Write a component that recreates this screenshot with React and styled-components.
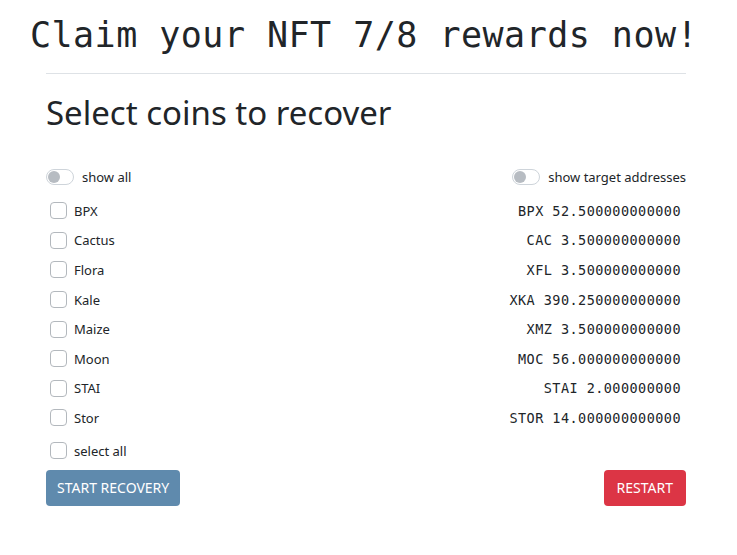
import React, { useState } from "react";
import styled, { createGlobalStyle } from "styled-components";

const GlobalStyle = createGlobalStyle`
  body {
    margin: 0;
    background: #fff;
    color: #212529;
    font-family: "Noto Sans", "Open Sans", sans-serif;
  }
`;

const coins = [
  { name: "BPX", amount: "BPX 52.500000000000" },
  { name: "Cactus", amount: "CAC 3.500000000000" },
  { name: "Flora", amount: "XFL 3.500000000000" },
  { name: "Kale", amount: "XKA 390.250000000000" },
  { name: "Maize", amount: "XMZ 3.500000000000" },
  { name: "Moon", amount: "MOC 56.000000000000" },
  { name: "STAI", amount: "STAI 2.000000000" },
  { name: "Stor", amount: "STOR 14.000000000000" },
];

function App() {
  const [checked, setChecked] = useState({});
  const [showAll, setShowAll] = useState(false);
  const [showTargets, setShowTargets] = useState(false);

  const allChecked = coins.every((c) => checked[c.name]);

  const toggleAll = () => {
    const next = {};
    coins.forEach((c) => (next[c.name] = !allChecked));
    setChecked(next);
  };

  return (
    <Page>
      <GlobalStyle />
      <Title>Claim your NFT 7/8 rewards now!</Title>
      <Container>
        <Divider />
        <Heading>Select coins to recover</Heading>

        <ToggleRow>
          <Toggle>
            <Switch on={showAll} onClick={() => setShowAll(!showAll)} />
            show all
          </Toggle>
          <Toggle>
            <Switch on={showTargets} onClick={() => setShowTargets(!showTargets)} />
            show target addresses
          </Toggle>
        </ToggleRow>

        <CoinList>
          {coins.map((coin) => (
            <CoinRow key={coin.name}>
              <Check>
                <Box
                  checked={!!checked[coin.name]}
                  onClick={() =>
                    setChecked({ ...checked, [coin.name]: !checked[coin.name] })
                  }
                />
                {coin.name}
              </Check>
              <Amount>{coin.amount}</Amount>
            </CoinRow>
          ))}
        </CoinList>

        <SelectAll>
          <Check>
            <Box checked={allChecked} onClick={toggleAll} />
            select all
          </Check>
        </SelectAll>

        <Actions>
          <Button color="#5f8aad" pad="11px">START RECOVERY</Button>
          <Button color="#dc3545" pad="13px">RESTART</Button>
        </Actions>
      </Container>
    </Page>
  );
}

const Page = styled.div`
  width: 737px;
  padding-top: 12px;
`;

const Title = styled.h1`
  margin: 0;
  padding-right: 9px;
  text-align: center;
  font-family: "DejaVu Sans Mono", "Liberation Mono", monospace;
  font-weight: 400;
  font-size: 35px;
  line-height: 46px;
  color: #212529;
  letter-spacing: 0.48px;
`;

const Container = styled.div`
  width: 640px;
  margin-left: 46px;
`;

const Divider = styled.hr`
  margin: 15px 0 0;
  border: 0;
  border-top: 1px solid #dee2e6;
`;

const Heading = styled.h2`
  margin: 16px 0 0;
  font-weight: 400;
  font-size: 33px;
  line-height: 46px;
  color: #212529;
`;

const ToggleRow = styled.div`
  display: flex;
  justify-content: space-between;
  align-items: center;
  margin-top: 32px;
  font-size: 13px;
`;

const Toggle = styled.label`
  display: flex;
  align-items: center;
  gap: 8px;
  cursor: pointer;
`;

const Switch = styled.span`
  position: relative;
  display: inline-block;
  width: 26px;
  height: 14px;
  border: 1px solid ${(p) => (p.on ? "#0d6efd" : "#ced4da")};
  border-radius: 8px;
  background: ${(p) => (p.on ? "#0d6efd" : "#fff")};

  &::after {
    content: "";
    position: absolute;
    top: 1px;
    left: ${(p) => (p.on ? "13px" : "1px")};
    width: 12px;
    height: 12px;
    border-radius: 50%;
    background: ${(p) => (p.on ? "#fff" : "#b7bcc2")};
  }
`;

const CoinList = styled.div`
  margin-top: 10px;
  display: flex;
  flex-direction: column;
`;

const CoinRow = styled.div`
  display: flex;
  justify-content: space-between;
  align-items: center;
  height: 29.6px;
`;

const Check = styled.label`
  display: flex;
  align-items: center;
  gap: 7px;
  padding-left: 4px;
  font-size: 13px;
  cursor: pointer;
`;

const Box = styled.span`
  display: inline-block;
  width: 15px;
  height: 15px;
  border: 1px solid #b3b8bd;
  border-radius: 4px;
  background: ${(p) => (p.checked ? "#0d6efd" : "#fff")};
`;

const Amount = styled.span`
  font-family: "DejaVu Sans Mono", "Liberation Mono", monospace;
  font-size: 13.5px;
  letter-spacing: 0.45px;
  padding-right: 5px;
  color: #212529;
`;

const SelectAll = styled.div`
  margin-top: 6px;
  height: 24px;
  display: flex;
  align-items: center;
`;

const Actions = styled.div`
  display: flex;
  justify-content: space-between;
  margin-top: 7px;
`;

const Button = styled.button`
  height: 36px;
  padding: 0 ${(p) => p.pad};
  border: 0;
  border-radius: 4px;
  background: ${(p) => p.color};
  color: #fff;
  font-family: "Noto Sans", sans-serif;
  font-size: 14px;
  cursor: pointer;
`;

export default App;
